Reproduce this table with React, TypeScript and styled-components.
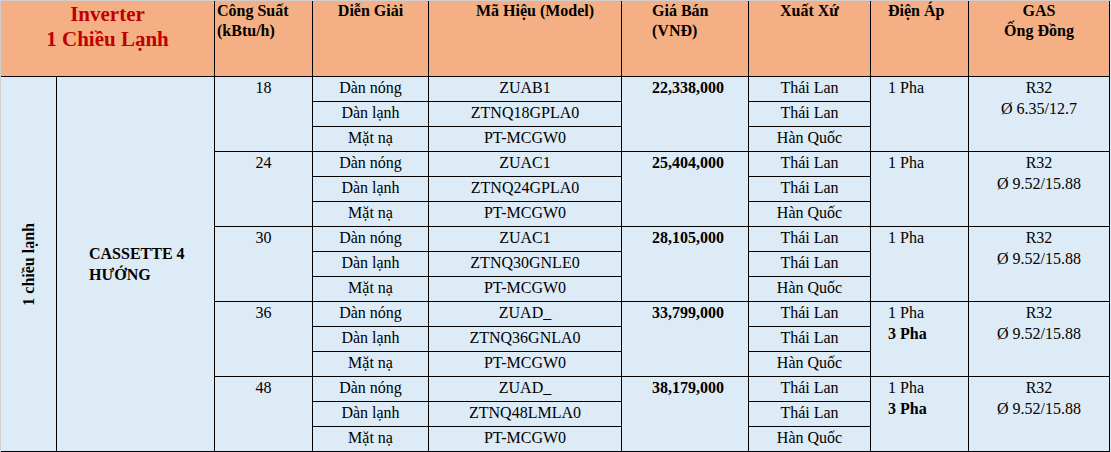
import React from "react";
import styled, { createGlobalStyle } from "styled-components";

const GlobalStyle = createGlobalStyle`
  html, body { margin: 0; padding: 0; background: #ffffff; }
  body { font-family: "Liberation Serif", "Times New Roman", serif; color: #000; }
`;

const Frame = styled.div`
  width: 1110px;
  border-top: 1px solid #d0d0d0;
  border-left: 1px solid #d0d0d0;
`;

const Sheet = styled.div`
  display: grid;
  grid-template-columns: 56px 158px 98px 116px 193px 127px 122px 98px 141px;
  grid-template-rows: 76px repeat(15, 25px);
  background: #ddebf7;
  font-size: 16px;
`;

type Align = "left" | "center";

const Base = styled.div<{ $align?: Align; $pad?: number; $rows?: number; $cols?: number; $bold?: boolean }>`
  box-sizing: border-box;
  border-right: 1px solid #000;
  border-bottom: 1px solid #000;
  grid-row: span ${(p) => p.$rows ?? 1};
  grid-column: span ${(p) => p.$cols ?? 1};
  text-align: ${(p) => p.$align ?? "center"};
  padding-left: ${(p) => p.$pad ?? 0}px;
  font-weight: ${(p) => (p.$bold ? 700 : 400)};
  white-space: nowrap;
  overflow: hidden;
`;

const HeadCell = styled(Base)`
  background: #f4b084;
  font-weight: 700;
  line-height: 20px;
`;

const TitleCell = styled(HeadCell)`
  color: #c00000;
  font-size: 21px;
  line-height: 25px;
  padding-top: 1px;
`;

const Cell = styled(Base)`
  line-height: 21px;
`;

const SideCell = styled(Base)`
  display: flex;
  align-items: center;
  justify-content: center;
  font-weight: 700;
`;

const VerticalText = styled.span`
  writing-mode: vertical-rl;
  transform: rotate(180deg);
  line-height: 21px;
`;

const TypeCell = styled(Base)`
  display: flex;
  align-items: center;
  font-weight: 700;
  line-height: 21px;
  white-space: normal;
`;

const Line = styled.div<{ $bold?: boolean }>`
  font-weight: ${(p) => (p.$bold ? 700 : 400)};
`;

type Group = {
  cap: string;
  price: string;
  models: string[];
  threePhase: boolean;
  pipe: string;
};

const groups: Group[] = [
  { cap: "18", price: "22,338,000", models: ["ZUAB1", "ZTNQ18GPLA0", "PT-MCGW0"], threePhase: false, pipe: "Ø 6.35/12.7" },
  { cap: "24", price: "25,404,000", models: ["ZUAC1", "ZTNQ24GPLA0", "PT-MCGW0"], threePhase: false, pipe: "Ø 9.52/15.88" },
  { cap: "30", price: "28,105,000", models: ["ZUAC1", "ZTNQ30GNLE0", "PT-MCGW0"], threePhase: false, pipe: "Ø 9.52/15.88" },
  { cap: "36", price: "33,799,000", models: ["ZUAD_", "ZTNQ36GNLA0", "PT-MCGW0"], threePhase: true, pipe: "Ø 9.52/15.88" },
  { cap: "48", price: "38,179,000", models: ["ZUAD_", "ZTNQ48LMLA0", "PT-MCGW0"], threePhase: true, pipe: "Ø 9.52/15.88" },
];

const parts = ["Dàn nóng", "Dàn lạnh", "Mặt nạ"];
const origins = ["Thái Lan", "Thái Lan", "Hàn Quốc"];

export default function App() {
  return (
    <>
      <GlobalStyle />
      <Frame>
        <Sheet>
          <TitleCell $cols={2}>
            <div>Inverter</div>
            <div>1 Chiều Lạnh</div>
          </TitleCell>
          <HeadCell $align="left" $pad={2}>
            <div>Công Suất</div>
            <div>(kBtu/h)</div>
          </HeadCell>
          <HeadCell>Diễn Giải</HeadCell>
          <HeadCell $pad={20}>Mã Hiệu (Model)</HeadCell>
          <HeadCell $align="left" $pad={30}>
            <div>Giá Bán</div>
            <div>(VNĐ)</div>
          </HeadCell>
          <HeadCell>Xuất Xứ</HeadCell>
          <HeadCell $align="left" $pad={17}>Điện Áp</HeadCell>
          <HeadCell>
            <div>GAS</div>
            <div>Ống Đồng</div>
          </HeadCell>

          <SideCell $rows={15}>
            <VerticalText>1 chiều lạnh</VerticalText>
          </SideCell>
          <TypeCell $rows={15} $align="left" $pad={32}>
            <div>
              CASSETTE 4
              <br />
              HƯỚNG
            </div>
          </TypeCell>

          {groups.map((g) => (
            <React.Fragment key={g.cap}>
              <Cell $rows={3}>{g.cap}</Cell>
              <Cell>{parts[0]}</Cell>
              <Cell>{g.models[0]}</Cell>
              <Cell $rows={3} $align="left" $pad={30} $bold>
                {g.price}
              </Cell>
              <Cell>{origins[0]}</Cell>
              <Cell $rows={3} $align="left" $pad={17}>
                <Line>1 Pha</Line>
                {g.threePhase && <Line $bold>3 Pha</Line>}
              </Cell>
              <Cell $rows={3}>
                <Line>R32</Line>
                <Line>{g.pipe}</Line>
              </Cell>
              {[1, 2].map((i) => (
                <React.Fragment key={i}>
                  <Cell>{parts[i]}</Cell>
                  <Cell>{g.models[i]}</Cell>
                  <Cell>{origins[i]}</Cell>
                </React.Fragment>
              ))}
            </React.Fragment>
          ))}
        </Sheet>
      </Frame>
    </>
  );
}
